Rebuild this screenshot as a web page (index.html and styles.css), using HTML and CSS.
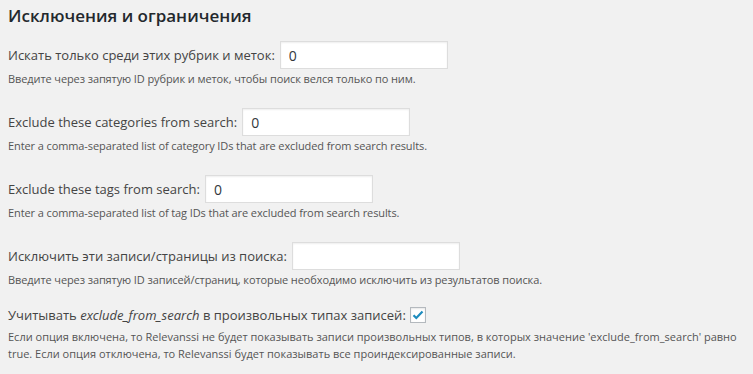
FILE: index.html
```html
<!DOCTYPE html>
<html lang="ru">
<head>
<meta charset="utf-8">
<link rel="stylesheet" href="styles.css">
</head>
<body>
<div class="wrap">
  <h3 class="title">Исключения и ограничения</h3>

  <div class="field">
    <div class="row"><label class="label">Искать только среди этих рубрик и меток:</label><input class="text" type="text" value="0"></div>
    <p class="desc">Введите через запятую ID рубрик и меток, чтобы поиск велся только по ним.</p>
  </div>

  <div class="field" lang="en">
    <div class="row"><label class="label">Exclude these categories from search:</label><input class="text" type="text" value="0"></div>
    <p class="desc">Enter a comma-separated list of category IDs that are excluded from search results.</p>
  </div>

  <div class="field" lang="en">
    <div class="row"><label class="label">Exclude these tags from search:</label><input class="text" type="text" value="0"></div>
    <p class="desc">Enter a comma-separated list of tag IDs that are excluded from search results.</p>
  </div>

  <div class="field">
    <div class="row"><label class="label">Исключить эти записи/страницы из поиска:</label><input class="text" type="text" value=""></div>
    <p class="desc">Введите через запятую ID записей/страниц, которые необходимо исключить из результатов поиска.</p>
  </div>

  <div class="field last">
    <div class="row"><label class="label">Учитывать <em>exclude_from_search</em> в произвольных типах записей:</label><span class="check"><svg width="12" height="10" viewBox="0 0 12 10"><path d="M1.5 5.2 L4.3 8 L10.5 1.5" fill="none" stroke="#1e8cbe" stroke-width="2.2"/></svg></span></div>
    <p class="desc">Если опция включена, то Relevanssi не будет показывать записи произвольных типов, в которых значение 'exclude_from_search' равно true. Если опция отключена, то Relevanssi будет показывать все проиндексированные записи.</p>
  </div>
</div>
</body>
</html>
```

FILE: styles.css
```css
html, body {
  margin: 0;
  padding: 0;
  background: #f1f1f1;
}
body {
  font-family: "Open Sans", "Noto Sans", sans-serif;
  color: #444;
}
.wrap {
  padding: 0 8px;
}
.title {
  margin: 0;
  padding-top: 4px;
  font-size: 17px;
  font-weight: 600;
  line-height: 24px;
  color: #23282d;
}
.field {
  margin-top: 13px;
}
.field + .field {
  margin-top: 20px;
}
.row {
  display: flex;
  align-items: center;
  height: 28px;
}
.label {
  font-size: 13px;
  line-height: 20px;
  color: #444;
}
.text {
  box-sizing: border-box;
  width: 168px;
  height: 28px;
  margin: 0 0 0 5px;
  padding: 0 8px;
  border: 1px solid #ddd;
  box-shadow: inset 0 1px 2px rgba(0,0,0,0.07);
  background: #fff;
  font-family: "Open Sans", sans-serif;
  font-size: 14px;
  color: #32373c;
  outline: none;
}
.desc {
  margin: 1px 0 0;
  font-size: 11px;
  letter-spacing: -0.1px;
  line-height: 18px;
  color: #555;
}
.desc:lang(en) {
  letter-spacing: -0.1px;
}
.check {
  box-sizing: border-box;
  display: inline-flex;
  align-items: center;
  justify-content: center;
  width: 16px;
  height: 16px;
  margin-left: 4px;
  border: 1px solid #b4b9be;
  background: #fff;
  box-shadow: inset 0 1px 2px rgba(0,0,0,0.1);
}
.last .row {
  height: 20px;
}
.last {
  margin-top: 16px !important;
}
.last .desc {
  line-height: 17px;
  margin-top: 3px;
  max-width: 740px;
  letter-spacing: 0;
}
```
